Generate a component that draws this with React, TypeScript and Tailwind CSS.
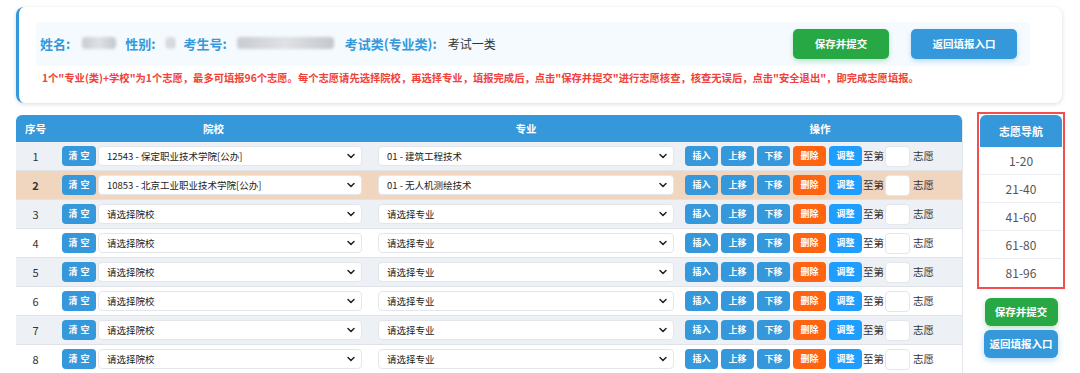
import { ChevronDown } from "lucide-react";

const rows = [
  { no: 1, school: "12543 - 保定职业技术学院[公办]", major: "01 - 建筑工程技术" },
  { no: 2, school: "10853 - 北京工业职业技术学院[公办]", major: "01 - 无人机测绘技术", active: true },
  { no: 3, school: "请选择院校", major: "请选择专业" },
  { no: 4, school: "请选择院校", major: "请选择专业" },
  { no: 5, school: "请选择院校", major: "请选择专业" },
  { no: 6, school: "请选择院校", major: "请选择专业" },
  { no: 7, school: "请选择院校", major: "请选择专业" },
  { no: 8, school: "请选择院校", major: "请选择专业" },
];

const ranges = ["1-20", "21-40", "41-60", "61-80", "81-96"];

function FakeSelect({ value, width }: { value: string; width: string }) {
  return (
    <div
      className={`${width} h-[20px] flex items-center justify-between bg-white border border-[#e3e6ea] rounded-[4px] pl-[8px] pr-[4px] text-[9.5px] text-[#222]`}
    >
      <span className="truncate">{value}</span>
      <ChevronDown size={12} strokeWidth={3} className="text-[#222]" />
    </div>
  );
}

function OpButton({ label, color }: { label: string; color: string }) {
  return (
    <button
      className={`${color} w-[33px] h-[20px] rounded-[4px] text-white text-[9px] font-bold flex items-center justify-center`}
    >
      {label}
    </button>
  );
}

function Blur({ w }: { w: string }) {
  return <span className={`${w} inline-block h-[12px] rounded-sm bg-gradient-to-r from-[#c9ccd2] via-[#dfe1e5] to-[#c4c7cc] blur-[1.5px]`} />;
}

export default function App() {
  return (
    <div
      className="w-[1080px] h-[373px] overflow-hidden bg-white pl-[16px] pt-[7px]"
      style={{ fontFamily: '"Noto Sans CJK SC", "Noto Sans", sans-serif' }}
    >
      {/* Info card */}
      <div className="w-[1046px] h-[96px] bg-white rounded-[8px] border-l-[3px] border-[#3498db] shadow-[0_1px_4px_rgba(0,0,0,0.15)] pt-[15px] pl-[17px] pr-[32px]">
        <div className="h-[44px] bg-[#f5faff] rounded-[4px] flex items-center pl-[4px] pr-[13px]">
          <div className="flex items-center text-[13px] font-bold text-[#3498db]">
            <span>姓名:</span>
            <span className="ml-[12px]"><Blur w="w-[34px]" /></span>
            <span className="ml-[9px]">性别:</span>
            <span className="ml-[11px]"><Blur w="w-[9px]" /></span>
            <span className="ml-[8px]">考生号:</span>
            <span className="ml-[10px]"><Blur w="w-[97px]" /></span>
            <span className="ml-[11px]">考试类(专业类):</span>
            <span className="ml-[11px] font-normal text-[12px] text-[#333]">考试一类</span>
          </div>
          <div className="ml-auto flex gap-[22px]">
            <button className="w-[96px] h-[30px] rounded-[5px] bg-[#28a745] text-white text-[10.5px] font-bold shadow-[0_2px_5px_rgba(40,167,69,0.3)]">
              保存并提交
            </button>
            <button className="w-[106px] h-[30px] rounded-[5px] bg-[#3498db] text-white text-[10.5px] font-bold shadow-[0_2px_5px_rgba(52,152,219,0.3)]">
              返回填报入口
            </button>
          </div>
        </div>
        <div className="mt-[4px] pl-[6px] text-[10.3px] font-bold text-[#f0413a] leading-[16px]">
          1个"专业(类)+学校"为1个志愿，最多可填报96个志愿。每个志愿请先选择院校，再选择专业，填报完成后，点击"保存并提交"进行志愿核查，核查无误后，点击"安全退出"，即完成志愿填报。
        </div>
      </div>

      <div className="flex mt-[6px] gap-[14px]">
        {/* Table */}
        <div className="w-[947px] mt-[6px] rounded-t-[6px] overflow-hidden border-r border-[#e3e6ea]">
          <div className="grid grid-cols-[39px_315px_310px_1fr] h-[27px] bg-[#3498db] text-white text-[10.5px] font-bold items-center">
            <div className="text-center">序号</div>
            <div className="text-center pl-[2px]">院校</div>
            <div className="text-center pl-[2px]">专业</div>
            <div className="text-center pr-[2px]">操作</div>
          </div>
          {rows.map((r) => (
            <div
              key={r.no}
              className={`grid grid-cols-[39px_315px_310px_1fr] h-[29px] items-center border-b border-[#dfe3e8] ${
                r.active ? "bg-[#f0d5bf]" : r.no % 2 === 1 ? "bg-[#edf1f6]" : "bg-white"
              }`}
            >
              <div className={`text-center text-[11px] text-[#333] ${r.active ? "font-bold" : ""}`}>{r.no}</div>
              <div className="flex items-center pl-[7px] gap-[2px]">
                <button className="w-[34px] h-[20px] rounded-[4px] bg-[#3498db] text-white text-[9px] font-bold tracking-[3px] flex items-center justify-center pl-[3px]">
                  清空
                </button>
                <FakeSelect value={r.school} width="w-[264px]" />
              </div>
              <div className="pl-[8px]">
                <FakeSelect value={r.major} width="w-[296px]" />
              </div>
              <div className="flex items-center pl-[5px]">
                <div className="flex gap-[3px]">
                  <OpButton label="插入" color="bg-[#3498db]" />
                  <OpButton label="上移" color="bg-[#3498db]" />
                  <OpButton label="下移" color="bg-[#3498db]" />
                  <OpButton label="删除" color="bg-[#ff6411]" />
                  <OpButton label="调整" color="bg-[#1e9fff]" />
                </div>
                <span className="ml-[1px] text-[10.5px] text-[#333]">至第</span>
                <div className="ml-[1px] w-[25px] h-[21px] bg-white border border-[#e3e6ea] rounded-[4px]" />
                <span className="ml-[3px] text-[10.5px] text-[#333]">志愿</span>
              </div>
            </div>
          ))}
        </div>

        {/* Sidebar */}
        <div className="w-[88px] mt-[3px] flex flex-col items-center">
          <div className="w-[88px] border-2 border-[#f24e4e] px-[1px] pt-[1px] bg-white">
            <div className="h-[32px] bg-[#3498db] rounded-t-[6px] flex items-center justify-center text-white text-[11px] font-bold">
              志愿导航
            </div>
            {ranges.map((r, i) => (
              <div
                key={r}
                className={`h-[28px] flex items-center justify-center text-[12px] text-[#555] ${
                  i < ranges.length - 1 ? "border-b border-[#eceef1]" : ""
                }`}
              >
                {r}
              </div>
            ))}
          </div>
          <button className="mt-[9px] w-[73px] h-[28px] rounded-[6px] bg-[#28a745] text-white text-[10.5px] font-bold shadow-[0_2px_5px_rgba(40,167,69,0.3)]">
            保存并提交
          </button>
          <button className="mt-[4px] w-[74px] h-[28px] rounded-[6px] bg-[#3498db] text-white text-[10.5px] font-bold shadow-[0_2px_6px_rgba(52,152,219,0.35)]">
            返回填报入口
          </button>
        </div>
      </div>
    </div>
  );
}
